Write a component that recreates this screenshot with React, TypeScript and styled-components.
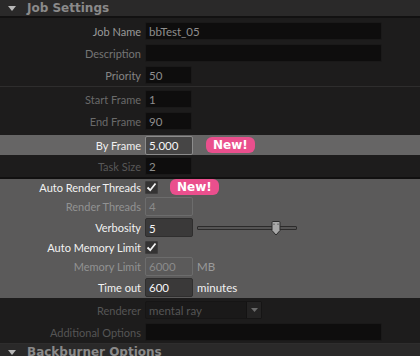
import styled, { createGlobalStyle } from "styled-components";

const GlobalStyle = createGlobalStyle`
  body {
    margin: 0;
    background: #1d1c1c;
    font-family: Lato, "Liberation Sans", sans-serif;
    font-size: 11px;
    overflow: hidden;
  }
`;

type FieldVariant = "dark" | "bright" | "gray" | "disabled";

export default function App() {
  return (
    <>
      <GlobalStyle />
      <Page>
        <Header>
          <Arrow />
          <HeaderTitle>Job Settings</HeaderTitle>
        </Header>

        <Group $padTop={2}>
          <Row>
            <Label $color="#9a9a9a">Job Name</Label>
            <Field $width={237}>bbTest_05</Field>
          </Row>
          <Row>
            <Label $color="#757575">Description</Label>
            <Field $width={237} />
          </Row>
          <Row>
            <Label $color="#858585">Priority</Label>
            <Field $width={47}>50</Field>
          </Row>
        </Group>

        <Group $topLine $padTop={1}>
          <Row>
            <Label $color="#6a6a6a">Start Frame</Label>
            <Field $width={47}>1</Field>
          </Row>
          <Row>
            <Label $color="#6a6a6a">End Frame</Label>
            <Field $width={47}>90</Field>
          </Row>
          <Row $highlight $height={20} $gapTop={3}>
            <Label $color="#f0f0f0">By Frame</Label>
            <Field $width={48} $variant="bright">5.000</Field>
            <Badge $offset={9}>New!</Badge>
          </Row>
          <Row>
            <Label $color="#585858">Task Size</Label>
            <Field $width={47}>2</Field>
          </Row>
        </Group>

        <GraySection>
          <Row $height={16}>
            <Label $color="#f2f2f2">Auto Render Threads</Label>
            <Check>
              <CheckMark />
            </Check>
            <Badge $offset={8}>New!</Badge>
          </Row>
          <Row $height={22}>
            <Label $color="#929292">Render Threads</Label>
            <Field $width={48} $variant="disabled">4</Field>
          </Row>
          <Row $height={21}>
            <Label $color="#f2f2f2">Verbosity</Label>
            <Field $width={48} $variant="gray">5</Field>
            <Slider>
              <Track />
              <Thumb viewBox="0 0 10 15" $left={74}>
                <path
                  d="M1 1.5 Q1 0.5 2 0.5 H8 Q9 0.5 9 1.5 V9.5 L5 14 L1 9.5 Z"
                  fill="#a8a8a8"
                  stroke="#2a2a2a"
                  strokeWidth="1"
                />
                <path d="M3 2.5 V4 M7 2.5 V4" stroke="#555" strokeWidth="1" />
              </Thumb>
            </Slider>
          </Row>
          <Row $height={18}>
            <Label $color="#f2f2f2">Auto Memory Limit</Label>
            <Check>
              <CheckMark />
            </Check>
          </Row>
          <Row $height={20}>
            <Label $color="#929292">Memory Limit</Label>
            <Field $width={48} $variant="disabled">6000</Field>
            <Unit $color="#9a9a9a">MB</Unit>
          </Row>
          <Row $height={22}>
            <Label $color="#f2f2f2">Time out</Label>
            <Field $width={48} $variant="gray">600</Field>
            <Unit $color="#f2f2f2">minutes</Unit>
          </Row>
        </GraySection>

        <Group $padTop={1}>
          <Row>
            <Label $color="#555555">Renderer</Label>
            <Combo>
              <ComboText>mental ray</ComboText>
              <ComboButton>
                <svg width="7" height="4" viewBox="0 0 7 4">
                  <path d="M0 0 H7 L3.5 4 Z" fill="#6a6a6a" />
                </svg>
              </ComboButton>
            </Combo>
          </Row>
          <Row>
            <Label $color="#555555">Additional Options</Label>
            <Field $width={237} />
          </Row>
        </Group>

        <Header $topLine>
          <Arrow />
          <HeaderTitle>Backburner Options</HeaderTitle>
        </Header>
      </Page>
    </>
  );
}

function CheckMark() {
  return (
    <svg width="11" height="10" viewBox="0 0 11 10">
      <path
        d="M1.5 5.5 L4.2 8.2 L9.5 1.5"
        fill="none"
        stroke="#f4f4f4"
        strokeWidth="1.8"
      />
    </svg>
  );
}

const Page = styled.div`
  width: 420px;
  height: 356px;
  display: flex;
  flex-direction: column;
  background: #1d1c1c;
`;

const Header = styled.div<{ $topLine?: boolean }>`
  height: 16px;
  flex-shrink: 0;
  display: flex;
  align-items: center;
  gap: 11px;
  padding-left: 8px;
  background: #2a2929;
  border-top: ${(p) => (p.$topLine ? "1px solid #2e2d2d" : "none")};
  border-bottom: 2px solid #121111;
`;

const Arrow = styled.div`
  width: 0;
  height: 0;
  border-left: 4px solid transparent;
  border-right: 4px solid transparent;
  border-top: 5px solid #b8b8b8;
`;

const HeaderTitle = styled.span`
  font-family: "DejaVu Sans", sans-serif;
  font-weight: bold;
  font-size: 12px;
  color: #8a8a8a;
`;

const Group = styled.div<{ $topLine?: boolean; $padTop?: number }>`
  display: flex;
  flex-direction: column;
  padding-top: ${(p) => p.$padTop ?? 0}px;
  border-top: ${(p) => (p.$topLine ? "1px solid #2e2d2d" : "none")};
`;

const Row = styled.div<{ $height?: number; $highlight?: boolean; $gapTop?: number }>`
  height: ${(p) => p.$height ?? 22}px;
  margin-top: ${(p) => p.$gapTop ?? 0}px;
  flex-shrink: 0;
  display: flex;
  align-items: center;
  gap: 4px;
  background: ${(p) => (p.$highlight ? "#666565" : "transparent")};
`;

const Label = styled.div<{ $color: string }>`
  width: 141px;
  flex-shrink: 0;
  text-align: right;
  color: ${(p) => p.$color};
  font-size: 11px;
  white-space: nowrap;
`;

const fieldStyles: Record<FieldVariant, string> = {
  dark: "background: #0e0d0d; border-color: #1a1919; color: #8e8e8e;",
  bright: "background: #464545; border-color: #8c8c8c; color: #f6f6f6;",
  gray: "background: #3a3939; border-color: #2f2e2e; color: #f6f6f6;",
  disabled: "background: transparent; border-color: #6c6c6c; color: #8a8a8a;",
};

const Field = styled.div<{ $width: number; $variant?: FieldVariant }>`
  box-sizing: border-box;
  width: ${(p) => p.$width}px;
  height: ${(p) => (p.$variant && p.$variant !== "dark" ? 19 : 18)}px;
  flex-shrink: 0;
  display: flex;
  align-items: center;
  padding: 1px 3px 0;
  border: 1px solid;
  border-radius: 2px;
  font-size: 11.5px;
  ${(p) => fieldStyles[p.$variant ?? "dark"]}
`;

const Badge = styled.div<{ $offset: number }>`
  margin-left: ${(p) => p.$offset}px;
  height: 16px;
  padding: 0 7px;
  display: flex;
  align-items: center;
  background: #ea4f8d;
  border-radius: 6px;
  color: #ffffff;
  font-family: "DejaVu Sans", sans-serif;
  font-weight: bold;
  font-size: 12px;
`;

const GraySection = styled.div`
  display: flex;
  flex-direction: column;
  background: #5b5a5a;
  border-top: 2px solid #111010;
`;

const Check = styled.div`
  box-sizing: border-box;
  width: 13px;
  height: 13px;
  display: flex;
  align-items: center;
  justify-content: center;
  background: #343333;
  border: 1px solid #3e3d3d;
  border-radius: 1px;
`;

const Slider = styled.div`
  position: relative;
  width: 100px;
  height: 16px;
  display: flex;
  align-items: center;
`;

const Track = styled.div`
  box-sizing: border-box;
  width: 100%;
  height: 4px;
  background: #555454;
  border: 1px solid #2c2b2b;
  border-radius: 1px;
`;

const Thumb = styled.svg<{ $left: number }>`
  position: absolute;
  left: ${(p) => p.$left}px;
  top: 1px;
  width: 10px;
  height: 15px;
`;

const Unit = styled.span<{ $color: string }>`
  color: ${(p) => p.$color};
  font-size: 11.5px;
`;

const Combo = styled.div`
  box-sizing: border-box;
  width: 117px;
  height: 18px;
  display: flex;
  background: #1a1919;
  border: 1px solid #161515;
  border-radius: 2px;
`;

const ComboText = styled.div`
  flex: 1;
  display: flex;
  align-items: center;
  padding-left: 3px;
  color: #555555;
  font-size: 11.5px;
`;

const ComboButton = styled.div`
  width: 14px;
  display: flex;
  align-items: center;
  justify-content: center;
  background: #242323;
  border-left: 1px solid #141313;
`;
